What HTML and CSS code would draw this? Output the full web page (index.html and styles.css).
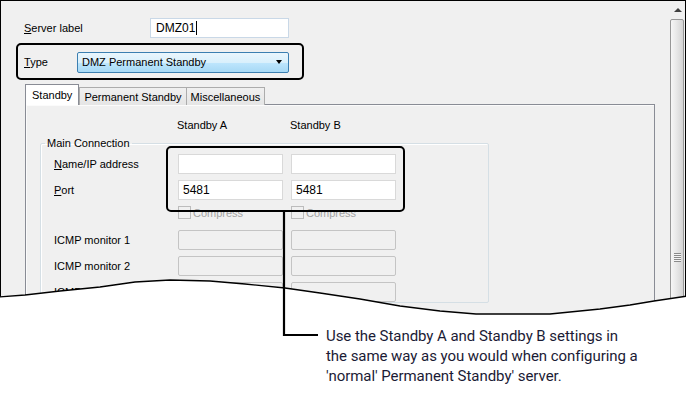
FILE: index.html
```html
<!DOCTYPE html>
<html lang="en">

    <head>
        <meta charset="UTF-8">
        <meta name="viewport"
            content="width=device-width,initial-scale=1.0">
        <title>DMZ server - Standby tab</title>
        <link rel="stylesheet" href="styles.css">
    </head>

    <body>
        <div class="page">
            <div class="frame">
                <div class="dialog">
                    <div class="field-row">
                        <span class="lbl lbl-server"><u>S</u>erver label</span>
                        <div class="input server-input">DMZ01<span class="caret"></span></div>
                    </div>
                    <div class="field-row type-row">
                        <span class="lbl lbl-type"><u>T</u>ype</span>
                        <div class="select">
                            <span>DMZ Permanent Standby</span>
                            <span class="arrow"></span>
                        </div>
                    </div>
                    <div class="tabs">
                        <div class="tab active">Standby</div>
                        <div class="tab">Permanent Standby</div>
                        <div class="tab">Miscellaneous</div>
                    </div>
                    <div class="panel">
                        <div class="col-heads">
                            <span>Standby A</span>
                            <span>Standby B</span>
                        </div>
                        <fieldset class="group">
                            <legend>Main Connection</legend>
                            <div class="rows">
                                <div class="row">
                                    <span class="lbl row-lbl"><u>N</u>ame/IP address</span>
                                    <div class="input cell"></div>
                                    <div class="input cell"></div>
                                </div>
                                <div class="row">
                                    <span class="lbl row-lbl"><u>P</u>ort</span>
                                    <div class="input cell">5481</div>
                                    <div class="input cell">5481</div>
                                </div>
                                <div class="row check-row">
                                    <span class="row-lbl"></span>
                                    <div class="check cell"><span class="box"></span>Compress</div>
                                    <div class="check cell"><span class="box"></span>Compress</div>
                                </div>
                                <div class="row">
                                    <span class="lbl row-lbl">ICMP monitor 1</span>
                                    <div class="input cell disabled"></div>
                                    <div class="input cell disabled"></div>
                                </div>
                                <div class="row">
                                    <span class="lbl row-lbl">ICMP monitor 2</span>
                                    <div class="input cell disabled"></div>
                                    <div class="input cell disabled"></div>
                                </div>
                                <div class="row">
                                    <span class="lbl row-lbl">ICMP monitor 3</span>
                                    <div class="input cell disabled"></div>
                                    <div class="input cell disabled"></div>
                                </div>
                            </div>
                        </fieldset>
                    </div>
                </div>
                <div class="scrollbar">
                    <div class="sb-up"><span class="sb-tri"></span></div>
                    <div class="sb-thumb"><span class="grip"></span></div>
                </div>
            </div>
            <p class="note">Use the Standby A and Standby B settings in<br>
                the same way as you would when configuring a<br>
                'normal' Permanent Standby' server.</p>

            <!-- annotation layer: torn edge, highlight boxes and leader line -->
            <svg class="marks" width="686" height="412" viewBox="0 0 686 412">
                <path class="tear-fill"
                    d="M-2 297 L25 295 L60 291 L100 287 L135 282 L170 280 L210 281 L245 284 L285 288 L320 293 L360 299 L400 306 L440 311 L476 314 L550 314 L600 309 L630 305 L654 301 L688 296 L688 322 L-2 322 Z" />
                <path class="tear-line"
                    d="M-2 297 L25 295 L60 291 L100 287 L135 282 L170 280 L210 281 L245 284 L285 288 L320 293 L360 299 L400 306 L440 311 L476 314 L550 314 L600 309 L630 305 L654 301 L688 296" />
                <rect class="hl" x="17" y="44" width="286" height="35" rx="4" />
                <rect class="hl" x="167" y="147" width="237" height="64" rx="4" />
                <path class="leader" d="M284 212 V335 H318" />
            </svg>
        </div>
    </body>

</html>
```

FILE: styles.css
```css
* {
    margin: 0;
    padding: 0;
    box-sizing: border-box;
}

body {
    width: 686px;
    height: 412px;
    background: #fff;
    overflow: hidden;
    font-family: "Liberation Sans", Arial, sans-serif;
    font-size: 11px;
    color: #000;
}

.page {
    position: relative;
    width: 686px;
    height: 412px;
}

.frame {
    display: flex;
    width: 686px;
    height: 318px;
    background: #f0f0f0;
    border-top: 1px solid #000;
    border-left: 1px solid #000;
    border-right: 1px solid #000;
    overflow: hidden;
}

.dialog {
    flex: 1;
    padding: 17px 0 0 23px;
}

.field-row {
    display: flex;
    align-items: center;
    height: 20px;
}

.lbl u {
    text-decoration: underline;
    text-underline-offset: 1px;
}

.lbl-server {
    width: 126px;
}

.lbl-type {
    width: 53px;
}

.type-row {
    margin-top: 14px;
}

.input {
    height: 20px;
    display: flex;
    align-items: center;
    padding-left: 4px;
    background: #fff;
    border: 1px solid #d9d9d9;
    font-size: 12px;
}

.server-input {
    width: 139px;
    border-color: #c9d8e7;
    padding-left: 5px;
}

.caret {
    display: inline-block;
    width: 1px;
    height: 14px;
    background: #000;
    margin-left: 1px;
}

.select {
    width: 212px;
    height: 21px;
    display: flex;
    align-items: center;
    justify-content: space-between;
    padding: 0 6px 0 4px;
    border: 1px solid #3c7fb1;
    border-radius: 2px;
    background: linear-gradient(#eaf6fd, #d9f0fc 50%, #bee6fd 51%, #a7d9f5);
    font-size: 11px;
}

.arrow {
    width: 0;
    height: 0;
    border-left: 3.5px solid transparent;
    border-right: 3.5px solid transparent;
    border-top: 4px solid #000;
}

.tabs {
    display: flex;
    align-items: flex-end;
    margin: 12px 0 0 1px;
    height: 20px;
    position: relative;
    z-index: 1;
}

.tab {
    height: 18px;
    padding: 0 4px;
    display: flex;
    align-items: center;
    border: 1px solid #acacac;
    border-bottom: none;
    background: linear-gradient(#f0f0f0, #e5e5e5);
    margin-bottom: -1px;
    font-size: 11px;
}

.tab + .tab {
    margin-left: -1px;
}

.tab.active {
    height: 21px;
    padding: 0 6px;
    background: #fff;
    border-color: #898c95;
    margin-bottom: -1px;
    position: relative;
    z-index: 2;
}

.tab.active + .tab {
    margin-left: 0;
}

.panel {
    width: 630px;
    height: 260px;
    margin-left: 1px;
    border: 1px solid #898c95;
    background: #f0f0f0;
    box-shadow: inset 1px 1px 0 #fbfbfb;
}

.col-heads {
    display: flex;
    padding: 13px 0 0 151px;
    height: 27px;
    line-height: 14px;
}

.col-heads span {
    width: 113px;
}

.group {
    width: 449px;
    margin: 4px 0 0 14px;
    padding: 4px 0 0 13px;
    border: 1px solid #d5dfe5;
    box-shadow: inset 1px 1px 0 #fff;
    border-radius: 2px;
}

.group legend {
    margin-left: -9px;
    padding: 0 2px;
    line-height: 14px;
}

.rows {
    display: flex;
    flex-direction: column;
    gap: 6px;
}

.row {
    display: flex;
    align-items: center;
    gap: 8px;
    height: 20px;
}

.row-lbl {
    width: 116px;
}

.cell {
    width: 105px;
}

.check-row {
    height: 18px;
    align-items: flex-start;
}

.check {
    display: flex;
    align-items: center;
    color: #a3a3a3;
    height: 13px;
}

.check .box {
    width: 13px;
    height: 13px;
    border: 1px solid #bcbcbc;
    background: #f0f0f0;
    margin-right: 2px;
}

.input.disabled {
    background: #f0f0f0;
    border-color: #c4c4c4;
    border-radius: 2px;
}

.scrollbar {
    width: 15px;
    display: flex;
    flex-direction: column;
    background: #f0f0f0;
}

.sb-up {
    height: 18px;
    display: flex;
    align-items: center;
    justify-content: center;
}

.sb-tri {
    width: 0;
    height: 0;
    border-left: 4px solid transparent;
    border-right: 4px solid transparent;
    border-bottom: 4px solid #404040;
}

.sb-thumb {
    flex: 1;
    margin-right: 1px;
    border: 1px solid #979797;
    border-radius: 2px;
    background: linear-gradient(90deg, #f6f6f6, #e8e8e8 45%, #d4d4d4);
    display: flex;
    justify-content: center;
    padding-top: 233px;
}

.grip {
    width: 7px;
    height: 9px;
    background: repeating-linear-gradient(#8a8a8a 0 1px, #f4f4f4 1px 2px);
}

.note {
    margin-top: 8px;
    padding-left: 326px;
    font-family: Roboto, "Liberation Sans", sans-serif;
    font-size: 15px;
    line-height: 20px;
    letter-spacing: -0.05px;
    color: #1b1b35;
}

.marks {
    position: absolute;
    left: 0;
    top: 0;
    pointer-events: none;
}

.tear-fill {
    fill: #fff;
}

.tear-line {
    fill: none;
    stroke: #000;
    stroke-width: 1.4;
}

.hl {
    fill: none;
    stroke: #000;
    stroke-width: 2;
}

.leader {
    fill: none;
    stroke: #000;
    stroke-width: 2.2;
}
```
